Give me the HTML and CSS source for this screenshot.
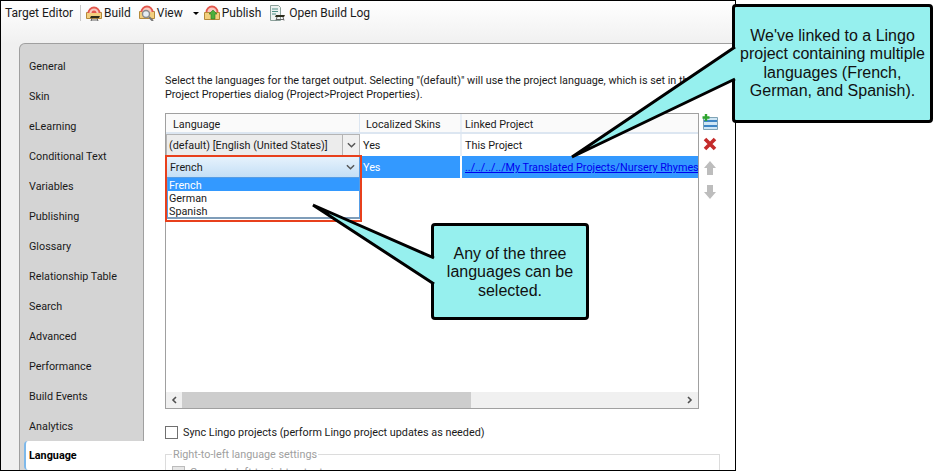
FILE: index.html
```html
<!DOCTYPE html>
<html lang="en">
<head>
  <meta charset="UTF-8" />
  <title>Target Editor</title>
  <link rel="stylesheet" href="styles.css">
</head>
<body>
  <div class="window">
    <div class="toolbar">
      <span class="tool-title">Target Editor</span>
      <span class="tool-sep"></span>
      <span class="tool tool-build">
        <svg class="ic" viewBox="0 0 16 16"><path d="M.5 7.500h15v6H.5z" fill="#f3cf7d" stroke="#b58a3a"/><path d="M2.500 8a5.500 5.500 0 0 1 11 0" fill="#f8c9c0" stroke="#e2574c" stroke-width="1.800"/><path d="M5.500 8a2.500 2.500 0 0 1 5 0z" fill="#e2574c"/><path d="M5 11h9l-1 2H4z" fill="#2b2b1a"/><path d="M6 13l-1 3M11 13l1 3M5 15h7" stroke="#666" fill="none"/></svg>
        Build
      </span>
      <span class="tool tool-view">
        <svg class="ic" viewBox="0 0 16 16"><path d="M.5 6.500h15v7H.5z" fill="#f3cf7d" stroke="#b58a3a"/><path d="M2.500 7a5.500 5.500 0 0 1 11 0" fill="#f8c9c0" stroke="#e2574c" stroke-width="1.800"/><circle cx="7" cy="9" r="3.500" fill="#e6edf3" stroke="#8a8a8a" stroke-width="1.400"/><path d="M10 12l4 4" stroke="#777" stroke-width="2"/></svg>
        View
      </span>
      <span class="tool-caret"></span>
      <span class="tool tool-publish">
        <svg class="ic" viewBox="0 0 16 16"><path d="M.5 7.500h15v7H.5z" fill="#f3cf7d" stroke="#b58a3a"/><path d="M2.500 7a5.500 5.500 0 0 1 11 0" fill="#f8c9c0" stroke="#e2574c" stroke-width="1.800"/><path d="M9 5l4 4h-2v5H7V9H5z" fill="#4caf3c" stroke="#2c7a22" stroke-width=".6"/></svg>
        Publish
      </span>
      <span class="tool tool-log">
        <svg class="ic" viewBox="0 0 16 16"><path d="M1.500.5h8l2 2v13h-10z" fill="#eef3f1" stroke="#8ba09a"/><path d="M3 4h6M3 6.500h6M3 9h4" stroke="#4f8f86"/><path d="M7 10h9l-1 2H6z" fill="#2b2b1a"/><path d="M8 12l-1 3.500M14 12l1 3.500M7 14.500h8" stroke="#666" fill="none"/></svg>
        Open Build Log
      </span>
    </div>
    <div class="main">
      <div class="rail">
        <ul class="tabs">
          <li>General</li>
          <li>Skin</li>
          <li>eLearning</li>
          <li>Conditional Text</li>
          <li>Variables</li>
          <li>Publishing</li>
          <li>Glossary</li>
          <li>Relationship Table</li>
          <li>Search</li>
          <li>Advanced</li>
          <li>Performance</li>
          <li>Build Events</li>
          <li>Analytics</li>
          <li class="active">Language</li>
        </ul>
      </div>
      <div class="content">
        <p class="intro">Select the languages for the target output. Selecting "(default)" will use the project language, which is set in the<br>Project Properties dialog (Project&gt;Project Properties).</p>
        <div class="table-row">
          <div class="grid">
            <div class="row head">
              <div class="c1">Language</div>
              <div class="c2">Localized Skins</div>
              <div class="c3">Linked Project</div>
            </div>
            <div class="row">
              <div class="c1 combo">
                <span>(default) [English (United States)]</span>
                <span class="combo-btn"><svg viewBox="0 0 10 6" class="chev"><path d="M1 1l4 4 4-4" fill="none" stroke="#555" stroke-width="1.6"/></svg></span>
              </div>
              <div class="c2">Yes</div>
              <div class="c3">This Project</div>
            </div>
            <div class="row selected">
              <div class="c1 combo open">
                <span>French</span>
                <svg viewBox="0 0 10 6" class="chev"><path d="M1 1l4 4 4-4" fill="none" stroke="#555" stroke-width="1.6"/></svg>
              </div>
              <div class="c2">Yes</div>
              <div class="c3"><a class="link">../../../../My Translated Projects/Nursery Rhymes/Nursery Rhymes.flprj</a></div>
            </div>
            <div class="spacer"></div>
            <div class="hscroll">
              <span class="sb-arrow">
                <svg viewBox="0 0 6 8" class="arrow"><path d="M5 1L2 4l3 3" fill="none" stroke="#505050" stroke-width="1.6"/></svg>
              </span>
              <span class="sb-thumb"></span>
              <span class="sb-rest"></span>
              <span class="sb-arrow">
                <svg viewBox="0 0 6 8" class="arrow"><path d="M1 1l3 3-3 3" fill="none" stroke="#505050" stroke-width="1.6"/></svg>
              </span>
            </div>
            <div class="dropdown">
              <div class="opt on">French</div>
              <div class="opt">German</div>
              <div class="opt">Spanish</div>
            </div>
            <div class="highlight"></div>
          </div>
          <div class="side-btns">
            <svg viewBox="0 0 16 16"><path d="M1.500 3.500h14v12h-14z" fill="#cfe6f5" stroke="#7fa3b5"/><path d="M2 6h13v2H2zM2 11h13v2H2z" fill="#3f86c6"/><path d="M4 0v7M.5 3.500h7" stroke="#2fa52f" stroke-width="2.400"/></svg>
            <svg viewBox="0 0 16 16"><path d="M3 3l10 10M13 3L3 13" stroke="#c42b2b" stroke-width="3.600"/></svg>
            <svg viewBox="0 0 16 16"><path d="M8 1l6 7h-3v7H5V8H2z" fill="#bdbdbd"/></svg>
            <svg viewBox="0 0 16 16"><path d="M8 15l6-7h-3V1H5v7H2z" fill="#bdbdbd"/></svg>
          </div>
        </div>
        <label class="sync"><span class="box"></span>Sync Lingo projects (perform Lingo project updates as needed)</label>
        <fieldset class="rtl">
          <legend>Right-to-left language settings</legend>
          <div class="rtl-row"><span class="box off"></span>Generate left-to-right output</div>
        </fieldset>
      </div>
    </div>
  </div>

  <div class="callout callout-link">
    <svg class="tail" viewBox="0 0 166 126"><path d="M165 11L2 121L165 43" fill="#96f0ee" stroke="#000" stroke-width="3"/></svg>
    <div class="bubble">We've linked to a Lingo project containing multiple languages (French, German, and Spanish).</div>
  </div>
  <div class="callout callout-any">
    <svg class="tail" viewBox="0 0 122 84"><path d="M122 54L1 1L122 80" fill="#96f0ee" stroke="#000" stroke-width="3"/></svg>
    <div class="bubble">Any of the three languages can be selected.</div>
  </div>
</body>
</html>
```

FILE: styles.css
```css
body {
  margin: 0;
  background-color: #ffffff;
  font-family: Roboto, sans-serif;
  font-size: 10.8px;
  color: #1a1a1a;
  overflow: hidden;
}
.window {
  width: 734px;
  height: 469px;
  border: 1px solid #000;
  background: linear-gradient(#ffffff, #f0f0f0 43px);
  display: flex;
  flex-direction: column;
  overflow: hidden;
}
.toolbar {
  height: 24px;
  flex: none;
  display: flex;
  align-items: center;
  padding-left: 4px;
  font-size: 12px;
}
.tool-title {
  margin-right: 7px;
}
.tool-sep {
  width: 1px;
  height: 16px;
  background-color: #c8c8c8;
  margin-right: 5px;
}
.tool {
  display: flex;
  align-items: center;
  gap: 2px;
  margin-right: 9px;
}
.tool-build {
  margin-right: 8px;
}
.tool-view {
  margin-right: 10px;
}
.tool-publish {
  margin-right: 8px;
}
.tool-log {
  gap: 4px;
}
.tool-caret {
  width: 0;
  height: 0;
  border-left: 3px solid transparent;
  border-right: 3px solid transparent;
  border-top: 3px solid #000;
  margin-right: 5px;
}
.ic {
  width: 16px;
  height: 16px;
}
.main {
  flex: 1;
  display: flex;
  padding: 18px 0 0 18px;
  min-height: 0;
}
.rail {
  width: 125px;
  flex: none;
}
.tabs {
  list-style: none;
  margin: 0;
  padding: 8px 0 0;
  height: 100%;
  background-color: #d4d4d4;
  border: 1px solid #a0a0a0;
  border-bottom: none;
  border-radius: 6px 0 0 0;
  box-sizing: border-box;
}
.tabs li {
  height: 30px;
  line-height: 30px;
  padding-left: 9px;
}
.tabs li.active {
  position: relative;
  margin-left: 4px;
  margin-right: -1px;
  padding-left: 3px;
  margin-top: -1px;
  height: 29px;
  line-height: 30px;
  font-weight: 700;
  color: #000;
  background-color: #fff;
  border-left: 2px solid #7db8ea;
  border-radius: 4px 0 0 4px;
}
.content {
  flex: 1;
  background-color: #fff;
  border-top: 1px solid #a0a0a0;
  padding: 30px 0 0 21px;
  min-width: 0;
  overflow: hidden;
}
.intro {
  margin: 0 0 11px;
  line-height: 14px;
  white-space: nowrap;
}
.table-row {
  display: flex;
  gap: 2px;
}
.grid {
  position: relative;
  width: 532px;
  height: 294px;
  border: 1px solid #a0a0a0;
  display: flex;
  flex-direction: column;
  background-color: #fff;
}
.row {
  display: flex;
  height: 22px;
  line-height: 24px;
  white-space: nowrap;
  overflow: hidden;
  flex: none;
}
.row.head {
  height: 18px;
  line-height: 22px;
  background-color: #fafafa;
  border-bottom: 2px solid #dce6f1;
}
.c1 {
  width: 194px;
  flex: none;
  box-sizing: border-box;
  padding-left: 7px;
  border-right: 1px solid #dce6f1;
}
.c2 {
  width: 102px;
  flex: none;
  box-sizing: border-box;
  padding-left: 3px;
  border-right: 2px solid #e9eff6;
}
.head .c2 {
  padding-left: 6px;
}
.c3 {
  flex: 1;
  padding-left: 3px;
  overflow: hidden;
}
.combo {
  display: flex;
  align-items: center;
  justify-content: space-between;
  padding: 0 0 0 2px;
  line-height: 18px;
  background-color: #ececec;
  border: 1px solid #b4b4b4;
}
.combo > span:first-child {
  padding-top: 2px;
}
.combo-btn {
  width: 16px;
  height: 100%;
  display: flex;
  align-items: center;
  justify-content: center;
  background-color: #f0f0f0;
  border-left: 1px solid #b4b4b4;
}
.chev {
  width: 9px;
  height: 6px;
  flex: none;
}
.combo.open {
  padding: 0 4px 0 3px;
  background: linear-gradient(#e6f2fc, #c4dff6);
  border: 1px solid #569de5;
  color: #1a1a1a;
}
.selected {
  background-color: #3399ff;
  color: #fff;
}
.selected .c2 {
  border-right-color: #fff;
}
.link {
  color: #0000ee;
  text-decoration: underline;
}
.spacer {
  flex: 1;
}
.hscroll {
  display: flex;
  height: 16px;
  flex: none;
  background-color: #f0f0f0;
}
.sb-arrow {
  width: 16px;
  display: flex;
  align-items: center;
  justify-content: center;
}
.arrow {
  width: 6px;
  height: 8px;
}
.sb-thumb {
  width: 289px;
  background-color: #cdcdcd;
}
.sb-rest {
  flex: 1;
}
.dropdown {
  position: absolute;
  left: 1px;
  top: 64px;
  width: 191px;
  height: 39px;
  background-color: #fff;
  border: 1px solid #569de5;
  border-top: none;
  border-bottom: 2px solid #7f9db9;
}
.opt {
  height: 13px;
  line-height: 15px;
  padding-left: 1px;
}
.opt.on {
  background-color: #3399ff;
  color: #fff;
}
.highlight {
  position: absolute;
  left: -1px;
  top: 41px;
  width: 193px;
  height: 63px;
  border: 2px solid #e8401c;
}
.side-btns {
  width: 18px;
  display: flex;
  flex-direction: column;
  align-items: center;
  padding-top: 1px;
}
.side-btns svg {
  width: 16px;
  height: 16px;
  margin-bottom: 8px;
}
.side-btns svg:first-child {
  margin-bottom: 6px;
}
.sync {
  display: flex;
  align-items: center;
  gap: 5px;
  margin-top: 16px;
  height: 14px;
}
.box {
  width: 11px;
  height: 11px;
  flex: none;
  border: 1px solid #707070;
  background-color: #fff;
}
.box.off {
  background-color: #e6e6e6;
  border-color: #bcbcbc;
}
.rtl {
  width: 547px;
  margin: 9px 0 0;
  padding: 5px 0 0 6px;
  border: 1px solid #dcdcdc;
  color: #a0a0a0;
}
.rtl legend {
  padding: 0 1px;
}
.rtl-row {
  display: flex;
  align-items: center;
  gap: 5px;
}
.callout {
  position: absolute;
}
.bubble {
  box-sizing: border-box;
  height: 100%;
  display: flex;
  align-items: center;
  justify-content: center;
  text-align: center;
  background-color: #96f0ee;
  border: 3px solid #000;
  border-radius: 4px;
  font-family: "Liberation Sans", Arial, sans-serif;
  font-size: 16px;
  line-height: 18.5px;
  color: #111;
}
.tail {
  position: absolute;
  overflow: visible;
  z-index: 1;
}
.callout-link {
  left: 732px;
  top: 4px;
  width: 201px;
  height: 119px;
}
.callout-link .bubble {
  padding: 0 3px;
}
.callout-link .tail {
  left: -162px;
  top: 32px;
  width: 166px;
  height: 126px;
}
.callout-any {
  left: 431px;
  top: 223px;
  width: 158px;
  height: 97px;
}
.callout-any .bubble {
  padding: 2px 10px 0;
}
.callout-any .tail {
  left: -119px;
  top: -19px;
  width: 122px;
  height: 84px;
}
```
